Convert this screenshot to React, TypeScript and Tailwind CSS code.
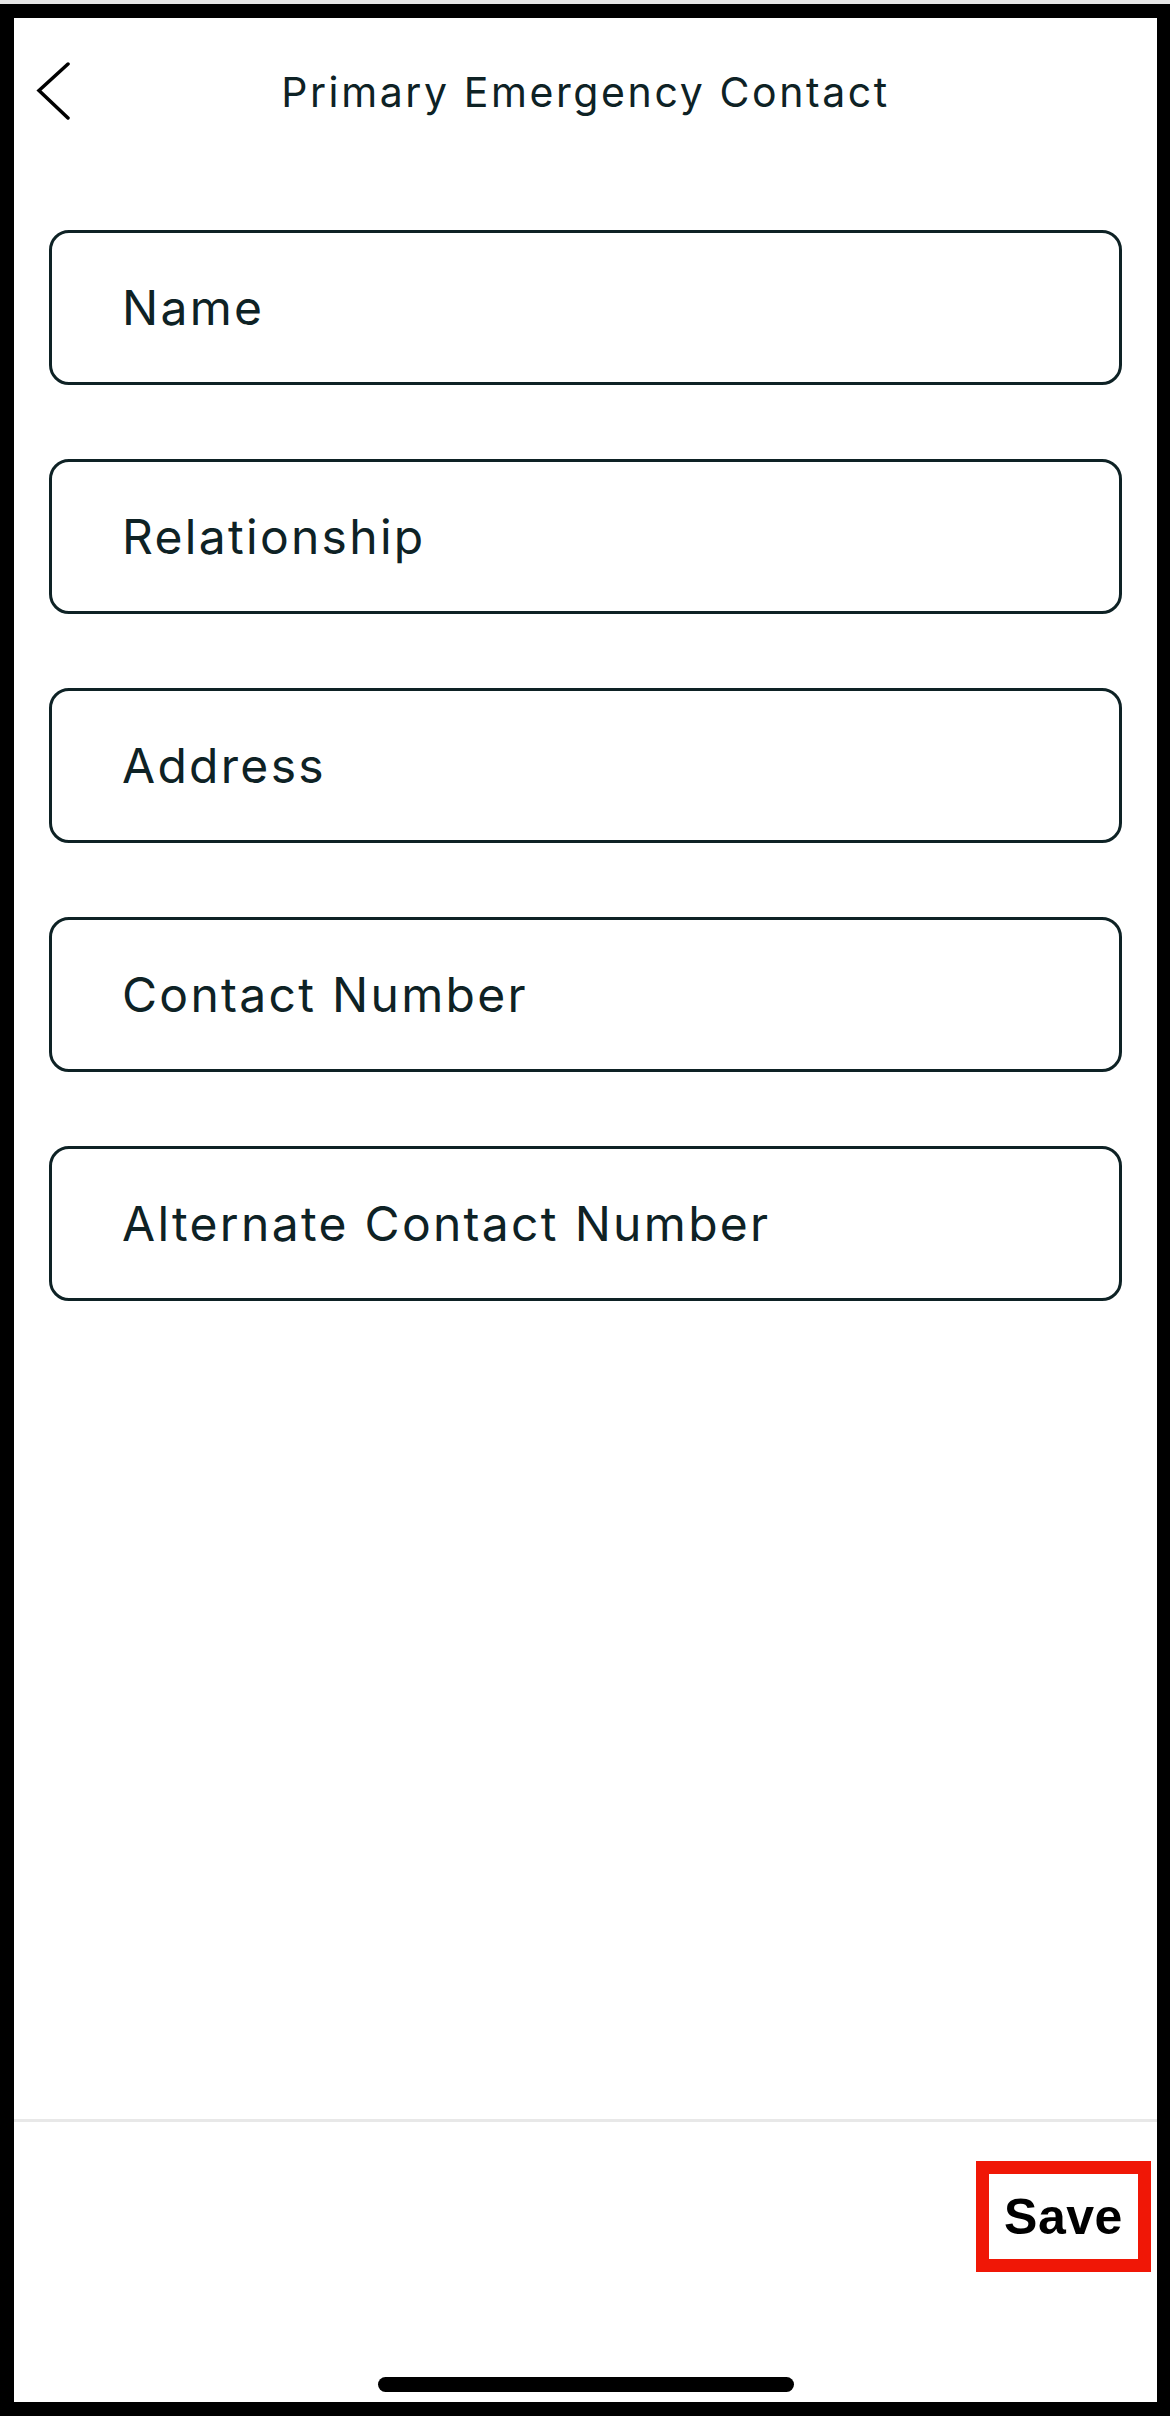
import React from "react";

const fields = [
  "Name",
  "Relationship",
  "Address",
  "Contact Number",
  "Alternate Contact Number",
];

function BackChevron() {
  return (
    <svg width="36" height="60" viewBox="0 0 36 60" fill="none">
      <polyline
        points="32,2 3,28.5 32,56"
        stroke="#000000"
        strokeWidth="3.5"
        strokeLinecap="round"
        strokeLinejoin="miter"
      />
    </svg>
  );
}

export default function App() {
  return (
    <div
      className="w-[1170px] h-[2416px] bg-[#e6e6e6] pt-[4px]"
      style={{ fontFamily: "Inter, 'Noto Sans', sans-serif" }}
    >
      <div className="h-[2412px] bg-black pt-[14px] pl-[14px] pr-[13px] pb-[14px]">
        <div className="h-full bg-white flex flex-col">
          {/* Header */}
          <div className="h-[148px] grid grid-cols-[1fr_auto_1fr] items-center flex-shrink-0">
            <div className="pl-[22px] flex items-center">
              <BackChevron />
            </div>
            <span className="text-[41px] leading-none text-[#0e2225] tracking-[2.6px]">
              Primary Emergency Contact
            </span>
            <div />
          </div>

          {/* Form fields */}
          <div className="flex flex-col gap-[74px] px-[35px] pt-[64px]">
            {fields.map((f) => (
              <div
                key={f}
                className="h-[155px] rounded-[20px] border-[3px] border-[#0e2225] flex items-center pl-[70px]"
              >
                <span className="text-[48px] leading-none font-normal text-[#0e2225] tracking-[2.3px]">
                  {f}
                </span>
              </div>
            ))}
          </div>

          <div className="flex-1" />

          {/* Footer */}
          <div className="border-t-[3px] border-[#e8e8e8] flex-shrink-0">
            <div className="flex justify-end pr-[6px] pt-[39px]">
              <button
                className="w-[175px] h-[111px] border-[13px] border-[#f01706] flex items-center justify-center text-[50px] font-bold text-black leading-none tracking-[0.5px]"
                style={{ fontFamily: "'Liberation Sans', Arial, sans-serif" }}
              >
                Save
              </button>
            </div>
            <div className="flex justify-center pt-[105px] pb-[10px]">
              <div className="w-[416px] h-[15px] rounded-full bg-black" />
            </div>
          </div>
        </div>
      </div>
    </div>
  );
}
